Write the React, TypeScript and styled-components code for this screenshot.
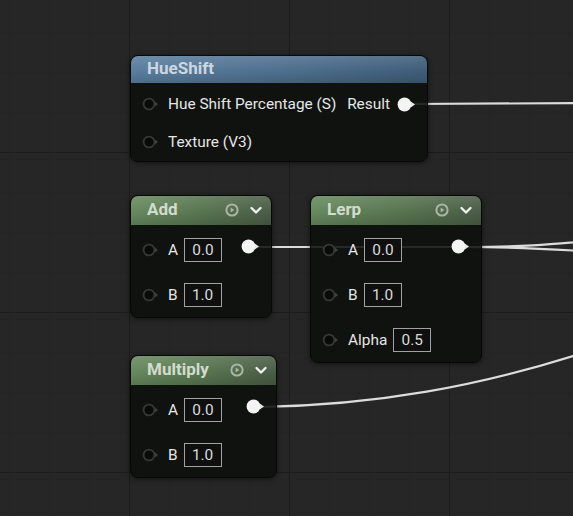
import React from 'react'
import styled, { createGlobalStyle } from 'styled-components'

type Tone = 'blue' | 'green'

const GlobalStyle = createGlobalStyle`
    html, body {
        margin: 0;
        padding: 0;
        background: #262626;
    }
    body {
        font-family: Roboto, "Noto Sans", "Liberation Sans", sans-serif;
    }
    * {
        box-sizing: border-box;
    }
`

const Canvas = styled.div`
    position: relative;
    width: 573px;
    height: 516px;
    overflow: hidden;
    background-color: #262626;
    background-image:
        linear-gradient(to right, #1c1c1c 1px, transparent 1px),
        linear-gradient(to bottom, #1c1c1c 1px, transparent 1px),
        linear-gradient(to right, #242424 1px, transparent 1px),
        linear-gradient(to bottom, #242424 1px, transparent 1px);
    background-size: 160px 160px, 160px 160px, 40px 40px, 40px 40px;
    background-position: 129px 152px;
`

const Wires = styled.svg`
    position: absolute;
    left: 0;
    top: 0;
    width: 573px;
    height: 516px;
`

const Wire = styled.path`
    fill: none;
    stroke: #dcdcdc;
    stroke-width: 2.2;
`

const NodeFrame = styled.div<{ $x: number; $y: number; $w: number }>`
    position: absolute;
    left: ${p => p.$x}px;
    top: ${p => p.$y}px;
    width: ${p => p.$w}px;
    border: 1px solid #060706;
    border-radius: 8px;
    background: rgba(14, 16, 14, 0.88);
    box-shadow: 0 1px 5px rgba(0, 0, 0, 0.55);
    overflow: hidden;
`

const Header = styled.div<{ $tone: Tone; $h: number }>`
    display: flex;
    align-items: center;
    height: ${p => p.$h}px;
    padding: 0 8px 3px 16px;
    background:
        linear-gradient(180deg, rgba(255, 255, 255, 0.12) 0%, rgba(255, 255, 255, 0) 55%, rgba(0, 0, 0, 0.14) 100%),
        ${p => p.$tone === 'blue'
            ? 'linear-gradient(90deg, #5b7e9f 0%, #4d6e8d 55%, #3f5d79 100%)'
            : 'linear-gradient(90deg, #678a5f 0%, #56734f 55%, #4a5d46 100%)'};
`

const Title = styled.span<{ $tone: Tone }>`
    flex: 1;
    font-size: 17px;
    font-weight: 700;
    color: ${p => (p.$tone === 'blue' ? '#cdd6df' : '#d3dbcf')};
`

const HeaderIcons = styled.div`
    display: flex;
    align-items: center;
    gap: 10px;
    margin-top: 2px;

    svg {
        flex-shrink: 0;
    }
`

const Body = styled.div`
    padding: 2px 0 0;
`

const Row = styled.div<{ $h: number }>`
    display: flex;
    align-items: center;
    justify-content: space-between;
    height: ${p => p.$h}px;
    padding: 0 11px 0 11px;

    svg {
        flex-shrink: 0;
    }
`

const InputSide = styled.div`
    display: flex;
    align-items: center;
    gap: 9px;
`

const OutputSide = styled.div<{ $lift?: boolean }>`
    display: flex;
    align-items: center;
    gap: 7px;
    margin-bottom: ${p => (p.$lift ? '6px' : '0')};
`

const Label = styled.span`
    display: flex;
    align-items: center;
    gap: 6px;
    font-size: 15.4px;
    color: #e6e6e6;
    white-space: nowrap;
`

const ValueBox = styled.span`
    display: inline-flex;
    align-items: center;
    justify-content: center;
    width: 38px;
    height: 24px;
    border: 1px solid #a2a2a2;
    background: #0e0f0e;
    font-size: 15.4px;
    color: #dadada;
`

const InputPin = () => (
    <svg width="17" height="14" viewBox="0 0 17 14">
        <circle cx="7" cy="7" r="5.4" fill="#090a09" stroke="#363836" strokeWidth="1.8" />
        <path d="M13 4.6 L16 7 L13 9.4 Z" fill="#3e403e" />
    </svg>
)

const OutputPin = () => (
    <svg width="19" height="15" viewBox="0 0 19 15">
        <circle cx="7.5" cy="7.5" r="6.9" fill="#f4f4f4" />
        <path d="M13.8 4.5 L18 7.5 L13.8 10.5 Z" fill="#e8e8e8" />
    </svg>
)

const PlayIcon = () => (
    <svg width="14" height="14" viewBox="0 0 14 14">
        <circle cx="7" cy="7" r="5.6" fill="none" stroke="#aab5a6" strokeWidth="2" />
        <path d="M5.6 4.4 L9.4 7 L5.6 9.6 Z" fill="#aab5a6" />
    </svg>
)

const ChevronIcon = () => (
    <svg width="14" height="14" viewBox="0 0 14 14">
        <path d="M2.5 5 L7 9.5 L11.5 5" fill="none" stroke="#f2f2f2" strokeWidth="2.3" strokeLinecap="round" strokeLinejoin="round" />
    </svg>
)

interface InputDef {
    label: string;
    value?: string;
}

interface GraphNodeProps {
    title: string;
    tone: Tone;
    x: number;
    y: number;
    w: number;
    headerH: number;
    rowH: number;
    inputs: InputDef[];
    output?: string;
    collapsible?: boolean;
}

const GraphNode = (props: GraphNodeProps) => {
    return (
        <NodeFrame $x={props.x} $y={props.y} $w={props.w}>
            <Header $tone={props.tone} $h={props.headerH}>
                <Title $tone={props.tone}>{props.title}</Title>
                {props.collapsible && (
                    <HeaderIcons>
                        <PlayIcon />
                        <ChevronIcon />
                    </HeaderIcons>
                )}
            </Header>
            <Body>
                {props.inputs.map((input, i) => (
                    <Row key={input.label} $h={props.rowH}>
                        <InputSide>
                            <InputPin />
                            <Label>
                                {input.label}
                                {input.value && <ValueBox>{input.value}</ValueBox>}
                            </Label>
                        </InputSide>
                        {i === 0 && props.output !== undefined && (
                            <OutputSide $lift={props.output === ''}>
                                {props.output && <Label>{props.output}</Label>}
                                <OutputPin />
                            </OutputSide>
                        )}
                    </Row>
                ))}
            </Body>
        </NodeFrame>
    )
}

export default function App() {
    return (
        <>
            <GlobalStyle />
            <Canvas>
                <Wires viewBox="0 0 573 516">
                    <Wire d="M410 104 L600 103" />
                    <Wire d="M254 247 L470 247 C520 247, 545 245, 600 240" />
                    <Wire d="M464 247 C520 247, 545 249, 600 252" />
                    <Wire d="M260 407 C380 405, 480 385, 573 356 S640 330, 700 300" />
                </Wires>

                <GraphNode
                    title="HueShift"
                    tone="blue"
                    x={130}
                    y={55}
                    w={298}
                    headerH={27}
                    rowH={38}
                    inputs={[{ label: 'Hue Shift Percentage (S)' }, { label: 'Texture (V3)' }]}
                    output="Result"
                />
                <GraphNode
                    title="Add"
                    tone="green"
                    x={130}
                    y={195}
                    w={142}
                    headerH={29}
                    rowH={45}
                    inputs={[{ label: 'A', value: '0.0' }, { label: 'B', value: '1.0' }]}
                    output=""
                    collapsible
                />
                <GraphNode
                    title="Lerp"
                    tone="green"
                    x={310}
                    y={195}
                    w={172}
                    headerH={29}
                    rowH={45}
                    inputs={[
                        { label: 'A', value: '0.0' },
                        { label: 'B', value: '1.0' },
                        { label: 'Alpha', value: '0.5' },
                    ]}
                    output=""
                    collapsible
                />
                <GraphNode
                    title="Multiply"
                    tone="green"
                    x={130}
                    y={355}
                    w={147}
                    headerH={29}
                    rowH={45}
                    inputs={[{ label: 'A', value: '0.0' }, { label: 'B', value: '1.0' }]}
                    output=""
                    collapsible
                />
            </Canvas>
        </>
    )
}
